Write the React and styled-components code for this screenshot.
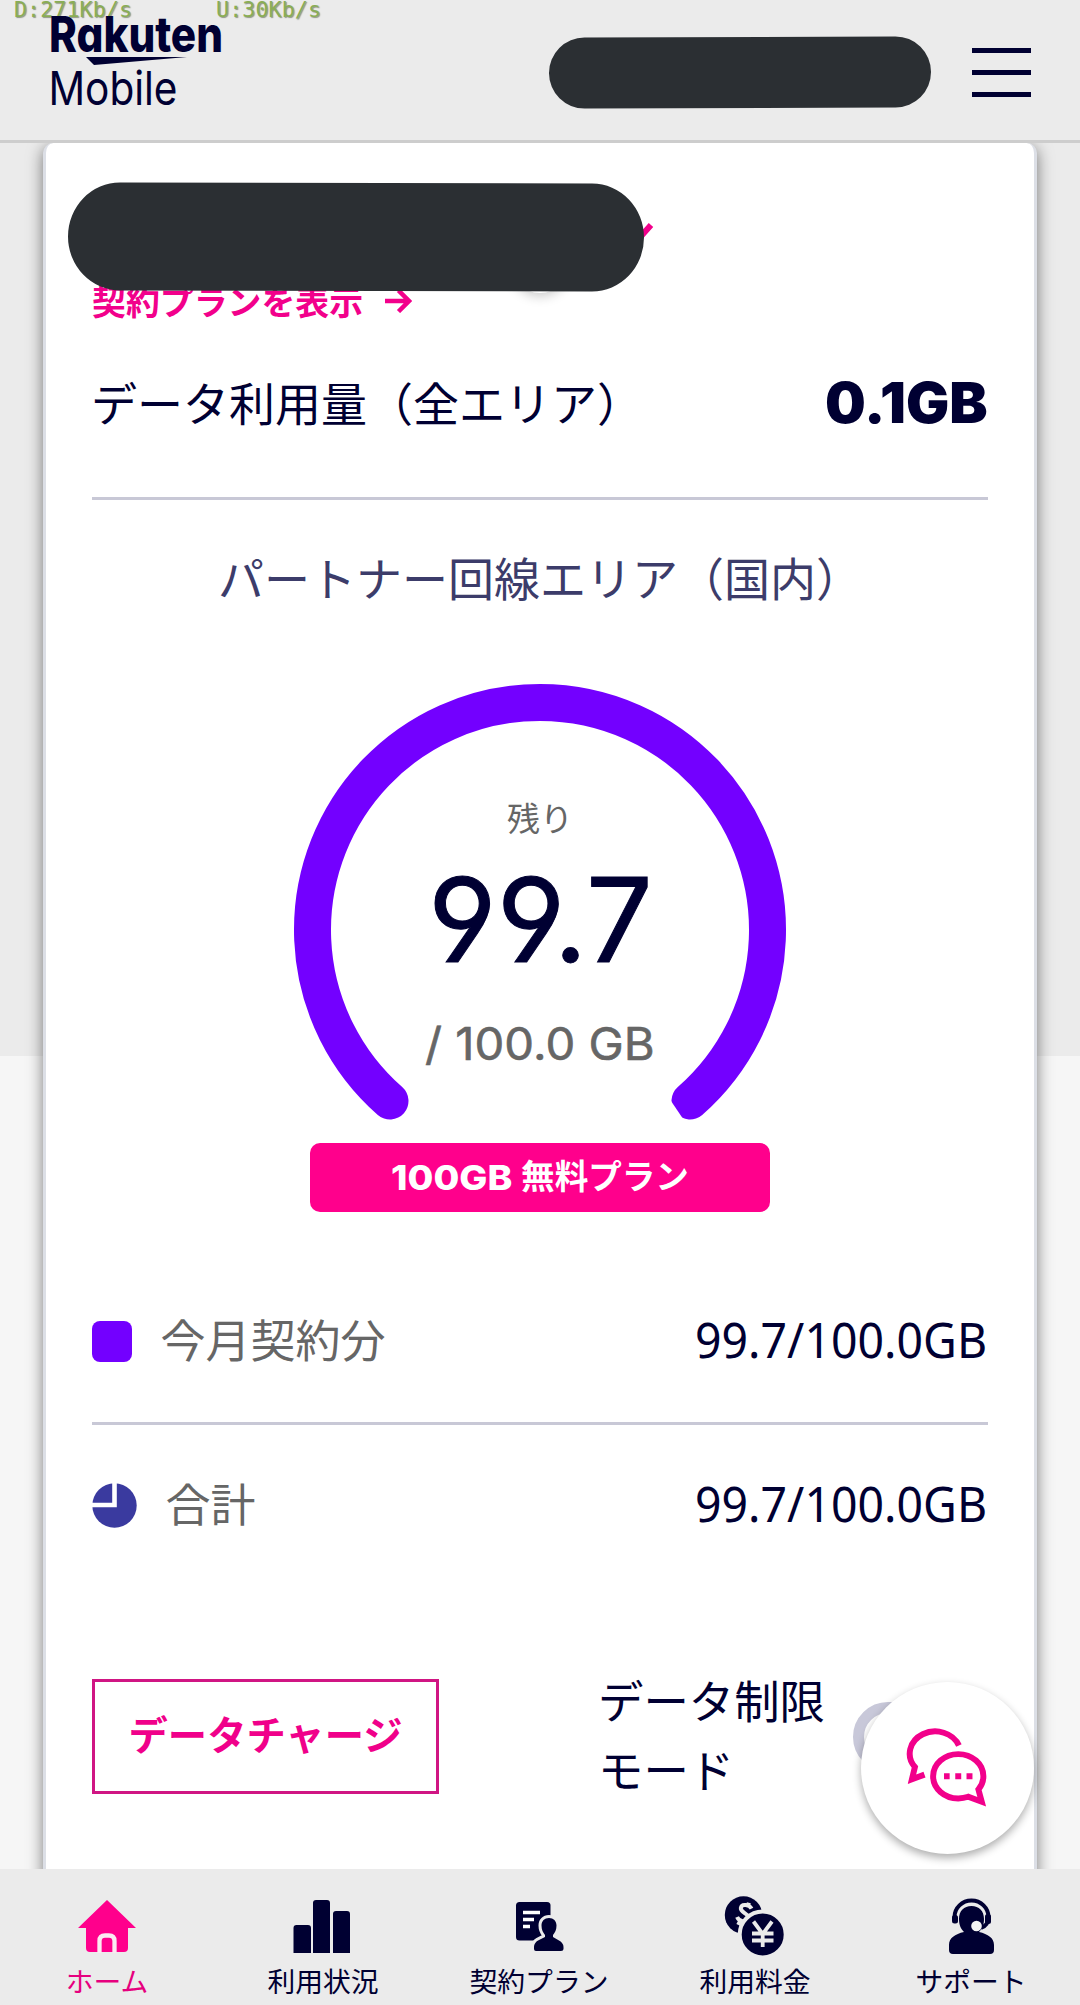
import React, { useLayoutEffect, useRef, useState } from "react";
import styled, { createGlobalStyle } from "styled-components";

const navy = "#000032";
const pink = "#ff008c";
const violet = "#7300ff";
const jp = '"Noto Sans CJK JP", "Noto Sans", sans-serif';

const Global = createGlobalStyle`
  * { box-sizing: border-box; }
  body { margin: 0; background: #ebebeb; font-family: ${jp}; color: ${navy}; }
`;

const Screen = styled.div`
  width: 1080px;
  height: 2005px;
  display: flex;
  flex-direction: column;
  overflow: hidden;
`;

const Header = styled.header`
  position: relative;
  flex: none;
  height: 143px;
  display: flex;
  align-items: flex-start;
  background: #ebebeb;
  border-bottom: 3px solid #cdcdcd;
  z-index: 2;
`;

const NetSpeed = styled.div`
  position: absolute;
  top: 0;
  left: 14px;
  display: flex;
  gap: 84px;
  font: 500 21.8px/19px "DejaVu Sans Mono", monospace;
  color: #8aad55;
  text-shadow: 1px 1px 1px rgba(70, 80, 50, 0.55);
  white-space: pre;
`;

const Logo = styled.svg`
  display: block;
  flex: none;
  width: 190px;
  height: 116px;
  margin-left: 45px;
  position: relative;
`;

const HeaderMask = styled.div`
  width: 382px;
  height: 71px;
  margin: 37px 0 0 313.500px;
  border-radius: 36px;
  background: #2b2f33;
  transform: rotate(-0.2deg);
`;

const MenuButton = styled.button`
  width: 59px;
  height: 49px;
  margin: 48px 0 0 41.500px;
  padding: 0;
  border: 0;
  background: none;
  display: flex;
  flex-direction: column;
  justify-content: space-between;
  span { height: 5px; background: ${navy}; }
`;

const Main = styled.main`
  flex: 1;
  min-height: 0;
  display: flex;
  justify-content: center;
  background: linear-gradient(#ebebeb 913px, #f6f6f6 913px);
`;

const Card = styled.section`
  width: 994px;
  height: 1760px;
  padding: 0 46px;
  background: #fff;
  border: solid #dcdfe6;
  border-width: 0 3px;
  border-radius: 10px 10px 0 0;
  box-shadow: 0 4px 16px rgba(0, 0, 0, 0.5);
`;

const PlanBlock = styled.div`
  position: relative;
  height: 197px;
  display: flex;
  align-items: flex-end;
  padding-bottom: 22px;
`;

const PlanLink = styled.a`
  display: flex;
  align-items: center;
  gap: 22px;
  font-size: 33.9px;
  line-height: 34px;
  font-weight: 700;
  color: #f2008b;
`;

const RoundShade = styled.div`
  position: absolute;
  left: 418px;
  top: 90px;
  width: 60px;
  height: 60px;
  border-radius: 50%;
  box-shadow: 0 3px 12px rgba(0, 0, 0, 0.22);
`;

const Chevron = styled.svg`
  position: absolute;
  left: 521px;
  top: 73px;
  width: 48px;
  height: 34px;
`;

const NameMask = styled.div`
  position: absolute;
  left: -24px;
  top: 40px;
  width: 576px;
  height: 108px;
  border-radius: 52px / 54px;
  background: #2b2f33;
  transform: rotate(0.12deg);
`;

const UsageRow = styled.div`
  height: 160px;
  padding-bottom: 29px;
  border-bottom: 3px solid #c8c8d6;
  display: flex;
  align-items: center;
  justify-content: space-between;
  font-size: 46px;
  line-height: 60px;
`;

const UsageLabel = styled.span`
  padding-bottom: 7px;
  margin-left: -1px;
`;

const AreaTitle = styled.h2`
  margin: 0;
  height: 160px;
  line-height: 153px;
  text-align: center;
  font-size: 46px;
  font-weight: 400;
  color: #3c3c6a;
`;

const Gauge = styled.div`
  height: 483px;
  padding-top: 22px;
  display: grid;
  justify-content: center;
  > * { grid-area: 1 / 1; }
`;

const GaugeSvg = styled.svg`
  width: 500px;
  height: 461px;
`;

const GaugeText = styled.div`
  display: flex;
  flex-direction: column;
  align-items: center;
  padding-top: 110px;
  color: #666;
`;

const Remaining = styled.div`
  font-size: 33px;
  line-height: 50px;
`;

const Amount = styled.div`
  margin-top: 7px;
  font-size: 117px;
  line-height: 124px;
  color: ${navy};
  -webkit-text-stroke: 1px ${navy};
`;

const Total = styled.div`
  margin-top: 31px;
  font-size: 45px;
  line-height: 50px;
  -webkit-text-stroke: 0.6px #666;
`;

const Badge = styled.div`
  width: 460px;
  height: 69px;
  margin: 0 auto;
  border-radius: 10px;
  background: ${pink};
  color: #fff;
  display: flex;
  align-items: center;
  justify-content: center;
  gap: 9px;
  font-size: 33.6px;
  line-height: 40px;
  font-weight: 700;
`;

const BadgeLabel = styled.span`
  padding-bottom: 5px;
`;

const BreakdownRow = styled.div`
  height: ${(p) => (p.$first ? 213 : 160)}px;
  padding-top: ${(p) => (p.$first ? 48 : 0)}px;
  border-bottom: ${(p) => (p.$first ? "3px solid #c8c8d6" : "0")};
  display: flex;
  align-items: center;
`;

const Swatch = styled.span`
  width: 40px;
  height: 41px;
  border-radius: 8px;
  background: ${violet};
`;

const PieIcon = styled.svg`
  width: 45px;
  height: 45px;
`;

const RowLabel = styled.span`
  flex: 1;
  margin-left: 28.500px;
  padding-bottom: 4px;
  font-size: 45px;
  line-height: 60px;
  color: #666;
`;

const RowValue = styled.span`
  padding-top: 11px;
  margin-right: 1px;
  line-height: 60px;
`;

const Actions = styled.div`
  height: 115px;
  margin-top: 94px;
  display: flex;
  align-items: center;
`;

const ChargeButton = styled.button`
  flex: none;
  width: 347px;
  height: 115px;
  padding: 0 0 7px;
  background: #fff;
  border: 3px solid #d01583;
  color: #f0008a;
  font: 700 39.3px/60px ${jp};
`;

const ModeLabel = styled.div`
  width: 229px;
  margin: -5px 0 0 159px;
  font-size: 45.4px;
  line-height: 69px;
  white-space: nowrap;
`;

const Toggle = styled.div`
  flex: none;
  width: 112px;
  height: 70px;
  margin-left: 26px;
  border: 11px solid #c8c8d9;
  border-radius: 35px;
`;

const ChatButton = styled.button`
  position: absolute;
  left: 861px;
  top: 1682px;
  width: 173px;
  height: 172px;
  padding: 0 2px 0 0;
  border: 0;
  border-radius: 50%;
  background: #fff;
  box-shadow: 0 4px 9px rgba(0, 0, 0, 0.32);
  display: grid;
  place-items: center;
  svg { width: 86px; height: 86px; }
`;

const Nav = styled.nav`
  position: relative;
  flex: none;
  height: 136px;
  display: grid;
  grid-template-columns: repeat(5, 216px);
  background: #ebebeb;
`;

const NavItem = styled.a`
  display: flex;
  flex-direction: column;
  align-items: center;
  padding: 26px 2px 0 0;
  color: ${(p) => (p.$active ? "#e6007e" : navy)};
  font-size: 27.8px;
  line-height: 40px;
  svg { width: 64px; height: 64px; overflow: visible; }
  span { margin-top: 1px; white-space: nowrap; }
`;

const FitBox = styled.span`
  display: inline-block;
  width: ${(p) => p.$width}px;
  height: 1.1em;
  line-height: 1.1em;
  white-space: pre;
  font-family: ${(p) => p.$family};
  font-weight: ${(p) => p.$weight};
  font-size: ${(p) => (p.$size ? `${p.$size}px` : "inherit")};
  font-feature-settings: "cv04" 1, "cv03" 1;
  span { display: inline-block; transform-origin: 0 50%; }
`;

const inter = 'Inter, "Liberation Sans", sans-serif';
const noto = '"Noto Sans", sans-serif';

function Fit({ width, weight = 400, size, family = inter, children }) {
  const ref = useRef(null);
  const [scale, setScale] = useState(1);
  useLayoutEffect(() => {
    const measure = () => setScale(width / ref.current.offsetWidth);
    measure();
    document.fonts?.ready.then(() => ref.current && measure());
  }, [width]);
  return (
    <FitBox $width={width} $weight={weight} $size={size} $family={family}>
      <span ref={ref} style={{ transform: `scaleX(${scale})` }}>{children}</span>
    </FitBox>
  );
}

const RakutenLogo = () => (
  <Logo viewBox="45 0 190 116" fill={navy}>
    <text x="49" y="52" fontFamily="Inter, Lato, sans-serif" fontWeight="800" fontSize="49" textLength="174" lengthAdjust="spacingAndGlyphs" style={{ fontFeatureSettings: '"cv11" 1' }}>Rakuten</text>
    <path d="M86 57H187L94 65Z" />
    <text x="48.500" y="105" fontFamily="Inter, Lato, sans-serif" fontWeight="400" fontSize="46.5" textLength="129" lengthAdjust="spacingAndGlyphs">Mobile</text>
  </Logo>
);

const HomeIcon = () => (
  <svg viewBox="75 1895 64 64">
    <path d="M107 1900 136 1928H128V1948Q128 1952 124 1952H90Q86 1952 86 1948V1928H78Z" fill={pink} />
    <path d="M99.5 1953V1941Q99.5 1935.500 105 1935.500H109Q114.500 1935.500 114.500 1941V1953" fill="none" stroke="#fbeaf2" strokeWidth="4.300" />
  </svg>
);
const ChartIcon = () => (
  <svg viewBox="291 1895 64 64" fill={navy}>
    <path d="M293.500 1953V1928q0-3 3-3H308q3 0 3 3V1953ZM313 1953V1903q0-3 3-3H327q3 0 3 3V1953ZM333 1953V1914q0-3 3-3H347q3 0 3 3V1953Z" />
  </svg>
);
const PlanIcon = () => (
  <svg viewBox="507 1895 64 64" fill={navy}>
    <rect x="516" y="1902" width="34.500" height="38.500" rx="3.500" />
    <path d="M523 1912.500H540M523 1919.500H534M523 1926.500H530" stroke="#fff" strokeWidth="3.600" />
    <path d="M549 1918C553.500 1918 556.500 1921 556.500 1925.500C556.500 1930 555 1932.500 553 1935V1937L559 1940.500Q563.500 1943 563.500 1947V1949Q563.500 1951 561 1951H536Q534 1951 534 1949V1947Q534 1943 538 1940.500L545 1937V1935C543 1932.500 541.500 1930 541.500 1925.500C541.500 1921 544.500 1918 549 1918Z" stroke="#ebebeb" strokeWidth="6" paintOrder="stroke" />
  </svg>
);
const CoinsIcon = () => (
  <svg viewBox="723 1895 64 64" fill={navy}>
    <circle cx="743.500" cy="1915" r="18.700" />
    <path d="M750 1907C747 1903.500 739 1904 739.500 1909C740 1914 750 1912 749.500 1918C749 1923 741 1922.500 738 1918.500M746 1902V1906M742 1921.500 741 1926" transform="rotate(14 744 1914)" fill="none" stroke="#ebebeb" strokeWidth="4" />
    <circle cx="762.700" cy="1934.500" r="23" stroke="#ebebeb" strokeWidth="4" />
    <path d="M753.500 1921.500 762.700 1934 772 1921.500M762.700 1934V1947M752 1933.500H773.500M752 1940.500H773.500" fill="none" stroke="#ebebeb" strokeWidth="3.800" />
  </svg>
);
const SupportIcon = () => (
  <svg viewBox="939 1895 64 64" fill={navy}>
    <path d="M954.500 1921V1917A17 16.500 0 0 1 988.500 1917Q988.500 1925 981 1928" fill="none" stroke={navy} strokeWidth="4" />
    <rect x="952" y="1915" width="6" height="8.500" rx="2.500" />
    <rect x="985" y="1914" width="6" height="10" rx="2.500" />
    <path d="M971.500 1906C979 1906 984 1911 984 1919C984 1925 982 1929 979 1932C988 1934 994 1938 994 1945V1950Q994 1954 990 1954H953Q949 1954 949 1950V1945C949 1938 955 1934 964 1932C961 1929 959 1925 959 1919C959 1911 964 1906 971.500 1906Z" />
    <circle cx="976.500" cy="1926" r="5.300" fill="#f4f4f4" />
  </svg>
);

const ChatIcon = () => (
  <svg viewBox="1030 255 260 260" fill="none" stroke="#f2008b" strokeWidth="18">
    <path d="M1196 317A77 67 0 1 0 1063 382L1054 419 1092 405" />
    <path d="M1224 472Q1210 477 1194 477A76 67 0 1 1 1270 410Q1270 432 1255 450L1265 487Z" />
    <path d="M1151 410H1168M1185 410H1203M1219 410H1237" />
  </svg>
);

const NAV = [
  { label: "ホーム", icon: <HomeIcon />, active: true },
  { label: "利用状況", icon: <ChartIcon /> },
  { label: "契約プラン", icon: <PlanIcon /> },
  { label: "利用料金", icon: <CoinsIcon /> },
  { label: "サポート", icon: <SupportIcon /> },
];

export default function App() {
  return (
    <Screen>
      <Global />
      <Header>
        <NetSpeed><span>D:271Kb/s</span><span>U:30Kb/s</span></NetSpeed>
        <RakutenLogo />
        <HeaderMask />
        <MenuButton aria-label="menu"><span /><span /><span /></MenuButton>
      </Header>
      <Main>
        <Card>
          <PlanBlock>
            <PlanLink>
              契約プランを表示
              <svg width="27" height="24" viewBox="0 0 27 24" fill="none" stroke="currentColor" strokeWidth="4.500"><path d="M0 12H24M13.500 1.500 24 12 13.500 22.500" /></svg>
            </PlanLink>
            <RoundShade />
            <Chevron viewBox="0 0 48 34" fill="none" stroke="#f2008b" strokeWidth="6"><path d="M3 9 21 28 38 9" /></Chevron>
            <NameMask />
          </PlanBlock>
          <UsageRow>
            <UsageLabel>データ利用量（全エリア）</UsageLabel>
            <Fit width={163} weight={900} size={56}>0.1GB</Fit>
          </UsageRow>
          <AreaTitle>パートナー回線エリア（国内）</AreaTitle>
          <Gauge>
            <GaugeSvg viewBox="290 682 500 461">
              <path d="M390 1101A227.500 227.500 0 1 1 690 1101" fill="none" stroke={violet} strokeWidth="37" strokeLinecap="round" />
              <path d="M671 1101 684.500 1121H668V1101Z" fill="#fff" />
            </GaugeSvg>
            <GaugeText>
              <Remaining>残り</Remaining>
              <Amount><Fit width={225}>99.7</Fit></Amount>
              <Total><Fit width={230}>/ 100.0 GB</Fit></Total>
            </GaugeText>
          </Gauge>
          <Badge>
            <Fit width={121} weight={800} size={34}>100GB</Fit>
            <BadgeLabel>無料プラン</BadgeLabel>
          </Badge>
          <BreakdownRow $first>
            <Swatch />
            <RowLabel>今月契約分</RowLabel>
            <RowValue><Fit width={292} size={48.5} family={noto}>99.7/100.0GB</Fit></RowValue>
          </BreakdownRow>
          <BreakdownRow>
            <PieIcon viewBox="0 0 45 45">
              <circle cx="22.500" cy="22.500" r="22.200" fill="#3a3a9f" />
              <path d="M22.500 0V22H0" fill="none" stroke="#fff" strokeWidth="4.600" />
            </PieIcon>
            <RowLabel>合計</RowLabel>
            <RowValue><Fit width={292} size={48.5} family={noto}>99.7/100.0GB</Fit></RowValue>
          </BreakdownRow>
          <Actions>
            <ChargeButton>データチャージ</ChargeButton>
            <ModeLabel>データ制限<br />モード</ModeLabel>
            <Toggle />
          </Actions>
        </Card>
      </Main>
      <ChatButton aria-label="chat"><ChatIcon /></ChatButton>
      <Nav>
        {NAV.map((n) => (
          <NavItem key={n.label} $active={n.active}>{n.icon}<span>{n.label}</span></NavItem>
        ))}
      </Nav>
    </Screen>
  );
}
